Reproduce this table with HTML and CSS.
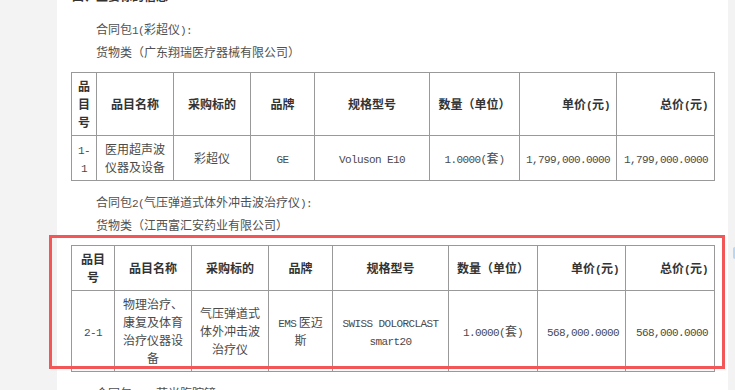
FILE: index.html
```html
<!DOCTYPE html>
<html lang="zh-CN">
<head>
<meta charset="utf-8">
<title>主要标的信息</title>
<link rel="stylesheet" href="styles.css">
</head>
<body>
<div class="page">
  <h3 class="title">四、主要标的信息</h3>
  <p class="sub">合同包<span class="en">1(</span>彩超仪<span class="en">):</span></p>
  <p class="sub">货物类（广东翔瑞医疗器械有限公司）</p>
  <div class="tbl-wrap">
    <table class="items">
      <colgroup>
        <col class="w25"><col class="w77"><col class="w77"><col class="w64"><col class="w115"><col class="w90"><col class="w97"><col class="w98">
      </colgroup>
      <tr class="head">
        <th>品目号</th><th>品目名称</th><th>采购标的</th><th>品牌</th><th>规格型号</th><th>数量（单位）</th><th class="num">单价<span class="en">(</span>元<span class="en">)</span></th><th class="num">总价<span class="en">(</span>元<span class="en">)</span></th>
      </tr>
      <tr>
        <td class="brk"><span class="en">1-1</span></td><td>医用超声波仪器及设备</td><td>彩超仪</td><td><span class="en">GE</span></td><td><span class="en">Voluson E10</span></td><td><span class="en">1.0000(</span>套<span class="en">)</span></td><td class="num"><span class="en">1,799,000.0000</span></td><td class="num"><span class="en">1,799,000.0000</span></td>
      </tr>
    </table>
  </div>
  <p class="sub">合同包<span class="en">2(</span>气压弹道式体外冲击波治疗仪<span class="en">):</span></p>
  <p class="sub">货物类（江西富汇安药业有限公司）</p>
  <div class="tbl-wrap marked">
    <table class="items">
      <colgroup>
        <col class="w43"><col class="w77"><col class="w77"><col class="w64"><col class="w116"><col class="w89"><col class="w88"><col class="w89">
      </colgroup>
      <tr class="head">
        <th>品目号</th><th>品目名称</th><th>采购标的</th><th>品牌</th><th>规格型号</th><th>数量（单位）</th><th class="num">单价<span class="en">(</span>元<span class="en">)</span></th><th class="num">总价<span class="en">(</span>元<span class="en">)</span></th>
      </tr>
      <tr>
        <td class="brk"><span class="en">2-1</span></td><td>物理治疗、康复及体育治疗仪器设备</td><td>气压弹道式体外冲击波治疗仪</td><td><span class="en">EMS</span> 医迈斯</td><td><span class="en">SWISS DOLORCLAST smart20</span></td><td><span class="en">1.0000(</span>套<span class="en">)</span></td><td class="num"><span class="en">568,000.0000</span></td><td class="num"><span class="en">568,000.0000</span></td>
      </tr>
    </table>
  </div>
  <p class="sub">合同包<span class="en">3(4K</span>荧光腹腔镜<span class="en">):</span></p>
</div>
<div class="side-widget"></div>
</body>
</html>
```

FILE: styles.css
```css
html, body {
  margin: 0;
  padding: 0;
}

body {
  background: #f3f3f3;
  height: 390px;
  overflow: hidden;
  font-family: "Noto Sans CJK SC", "Noto Sans", sans-serif;
  font-size: 12px;
  color: #505050;
}

.page {
  width: 643px;
  margin: -16px 0 0 57px;
  padding: 0 14px 40px 14px;
  background: #fff;
}

.title {
  margin: 0 0 10px 0;
  padding-left: 1px;
  font-size: 12px;
  line-height: 23px;
  font-weight: 700;
  color: #333;
}

.sub {
  margin: 0;
  padding-left: 25px;
  line-height: 23px;
  color: #505050;
}

.en {
  font-family: "Liberation Mono", monospace;
  font-size: 11px;
  line-height: 1;
  letter-spacing: -0.6px;
}

.tbl-wrap {
  margin: 9px 0 9px 0;
}

.marked {
  position: relative;
}

.marked::after {
  content: "";
  position: absolute;
  left: -22px;
  top: -10px;
  right: -11px;
  bottom: 3px;
  border: 3px solid #f25656;
  pointer-events: none;
}

.items {
  width: 643px;
  table-layout: fixed;
  border-collapse: collapse;
  color: #4a4a4a;
}

.items th,
.items td {
  border: 1px solid #999;
  padding: 4px 6px;
  line-height: 18px;
  text-align: center;
  vertical-align: middle;
}

.items th {
  font-weight: 700;
  color: #333;
}

.items .num {
  text-align: right;
}

.items .brk {
  word-break: break-all;
  padding-left: 5px;
  padding-right: 5px;
}

.w25 { width: 25px; }
.w43 { width: 43px; }
.w64 { width: 64px; }
.w77 { width: 77px; }
.w88 { width: 88px; }
.w89 { width: 89px; }
.w90 { width: 90px; }
.w97 { width: 97px; }
.w98 { width: 98px; }
.w115 { width: 115px; }
.w116 { width: 116px; }

.side-widget {
  position: absolute;
  left: 733px;
  top: 247px;
  width: 3px;
  height: 12px;
  background: #b9d6f2;
  border-radius: 2px 0 0 2px;
}
```
